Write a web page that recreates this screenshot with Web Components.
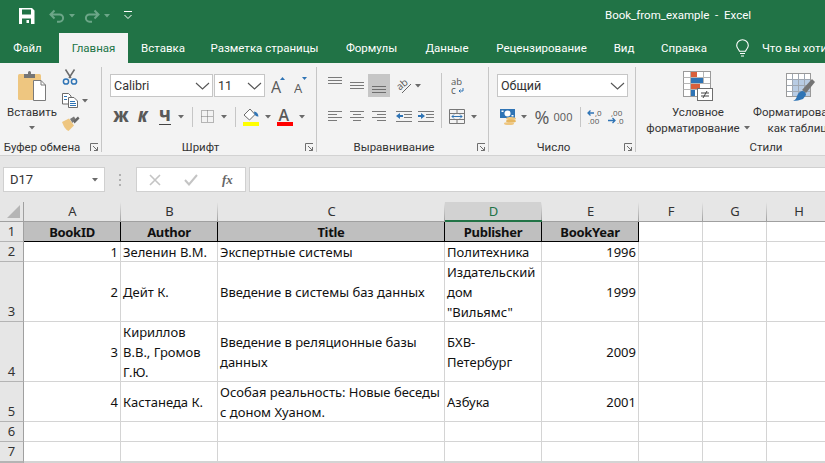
<!DOCTYPE html>
<html lang="ru">
<head>
<meta charset="utf-8">
<title>Book_from_example - Excel</title>
<style>
  html, body { margin: 0; height: 100%; overflow: hidden; background: #fff; }
  body { font: 11.5px Roboto, "Noto Sans", sans-serif; }
</style>
</head>
<body>
<x-excel>
  <x-titlebar title-text="Book_from_example  -  Excel"></x-titlebar>
  <x-tabs></x-tabs>
  <x-ribbon>
    <x-group w="102" label="Буфер обмена" launcher="11">
      <x-big w="64" top="4">
        <x-icon name="paste"></x-icon>
        <span>Вставить</span>
        <x-icon name="caret" style="margin-top:6px"></x-icon>
      </x-big>
      <x-col w="36" gap="8" top="2" style="margin-left:-2px">
        <x-row h="16"><x-tool w="16"><x-icon name="cut"></x-icon></x-tool></x-row>
        <x-row h="15"><x-tool w="16"><x-icon name="copy"></x-icon></x-tool><x-tool w="14"><x-icon name="caret"></x-icon></x-tool></x-row>
        <x-row h="15"><x-tool w="18"><x-icon name="painter"></x-icon></x-tool></x-row>
      </x-col>
    </x-group>

    <x-group w="215" label="Шрифт" launcher="11">
      <x-col w="214" gap="8" top="7">
        <x-row>
          <x-tool w="8"></x-tool>
          <x-combo w="103" text="Calibri"></x-combo>
          <x-tool w="1"></x-tool>
          <x-combo w="51" text="11"></x-combo>
          <x-tool w="6"></x-tool>
          <x-tool w="14"><x-icon name="grow"></x-icon></x-tool>
          <x-tool w="9"></x-tool>
          <x-tool w="13"><x-icon name="shrink"></x-icon></x-tool>
        </x-row>
        <x-row>
          <x-tool w="9"></x-tool>
          <x-tool w="20"><x-glyph b>Ж</x-glyph></x-tool>
          <x-tool w="23"><x-glyph b i>К</x-glyph></x-tool>
          <x-tool w="22"><x-glyph b u>Ч</x-glyph></x-tool>
          <x-tool w="10"><x-icon name="caret"></x-icon></x-tool>
          <x-tool w="13"><x-sep h="20"></x-sep></x-tool>
          <x-tool w="16"><x-icon name="borders"></x-icon></x-tool>
          <x-tool w="18"><x-icon name="caret"></x-icon></x-tool>
          <x-tool w="4"><x-sep h="20"></x-sep></x-tool>
          <x-tool w="28"><x-icon name="fill"></x-icon></x-tool>
          <x-tool w="6"><x-icon name="caret"></x-icon></x-tool>
          <x-tool w="28"><x-icon name="fontcolor"></x-icon></x-tool>
          <x-tool w="6"><x-icon name="caret"></x-icon></x-tool>
        </x-row>
      </x-col>
    </x-group>

    <x-group w="172" label="Выравнивание" launcher="11">
      <x-col w="124" gap="8" top="7">
        <x-row>
          <x-tool w="8"></x-tool>
          <x-tool w="20" style="align-items:flex-start;padding-top:3px"><x-icon name="vtop"></x-icon></x-tool>
          <x-tool w="23"><x-icon name="vmid"></x-icon></x-tool>
          <x-tool w="22" on="1" style="align-items:flex-end;padding-bottom:4px"><x-icon name="vbot"></x-icon></x-tool>
          <x-tool w="6"></x-tool>
          <x-tool w="16"><x-icon name="orient"></x-icon></x-tool>
          <x-tool w="12"><x-icon name="caret"></x-icon></x-tool>
        </x-row>
        <x-row>
          <x-tool w="8"></x-tool>
          <x-tool w="20"><x-icon name="aleft"></x-icon></x-tool>
          <x-tool w="23"><x-icon name="acenter"></x-icon></x-tool>
          <x-tool w="22"><x-icon name="aright"></x-icon></x-tool>
          <x-tool w="6"></x-tool>
          <x-tool w="16"><x-icon name="outdent"></x-icon></x-tool>
          <x-tool w="6"></x-tool>
          <x-tool w="16"><x-icon name="indent"></x-icon></x-tool>
        </x-row>
      </x-col>
      <x-sep h="55" style="margin-top:6px"></x-sep>
      <x-col w="46" gap="8" top="7">
        <x-row>
          <x-tool w="9"></x-tool>
          <x-tool w="13"><x-icon name="wrap"></x-icon></x-tool>
        </x-row>
        <x-row>
          <x-tool w="7"></x-tool>
          <x-tool w="16"><x-icon name="merge"></x-icon></x-tool>
          <x-tool w="17"><x-icon name="caret"></x-icon></x-tool>
        </x-row>
      </x-col>
    </x-group>

    <x-group w="147" label="Число" launcher="11">
      <x-col w="146" gap="8" top="7">
        <x-row>
          <x-tool w="8"></x-tool>
          <x-combo w="131" text="Общий"></x-combo>
        </x-row>
        <x-row>
          <x-tool w="11"></x-tool>
          <x-tool w="16"><x-icon name="money"></x-icon></x-tool>
          <x-tool w="16"><x-icon name="caret"></x-icon></x-tool>
          <x-tool w="20"><x-glyph size="18" light>%</x-glyph></x-tool>
          <x-tool w="22"><x-glyph size="11">000</x-glyph></x-tool>
          <x-tool w="12"><x-sep h="20"></x-sep></x-tool>
          <x-tool w="18"><x-icon name="decless"></x-icon></x-tool>
          <x-tool w="4"></x-tool>
          <x-tool w="16"><x-icon name="decmore"></x-icon></x-tool>
        </x-row>
      </x-col>
    </x-group>

    <x-group w="260" label="Стили" last>
      <x-big w="6"></x-big>
      <x-big w="112" top="4">
        <x-icon name="condfmt"></x-icon>
        <span>Условное</span>
        <span>форматирование<x-icon name="caret" style="margin-left:4px;vertical-align:2px"></x-icon></span>
      </x-big>
      <x-big w="92" top="6">
        <x-icon name="tablefmt"></x-icon>
        <span>Форматирование</span>
        <span>как таблицу</span>
      </x-big>
    </x-group>
  </x-ribbon>
  <x-formula-bar cell="D17"></x-formula-bar>
  <x-sheet></x-sheet>
</x-excel>

<script>
const ln = (c, ...rows) => `<path stroke="${c}" fill="none" d="${rows.map(r => `M${r[0]} ${r[1] + .5}H${r[2]}`).join('')}"/>`;

const ICONS = {
  save: [16, 16, `<path fill="#fff" fill-rule="evenodd" d="M0 0H13L15.5 2.5V16H0ZM3 1.5V6.5H12V1.5ZM3 10.5V16H12V10.5Z"/><rect x="7.5" y="12" width="2.5" height="3" fill="#fff"/>`],
  undo: [16, 14, `<path d="M5.5 1.5 1.5 5.5 5.5 9.5M1.5 5.5H10.5A3.6 3.6 0 0 1 10.5 12.7H8" fill="none" stroke="#6ca688" stroke-width="2"/>`],
  redo: [16, 14, `<path d="M10.5 1.5 14.5 5.5 10.5 9.5M14.5 5.5H5.5A3.6 3.6 0 0 0 5.5 12.7H8" fill="none" stroke="#6ca688" stroke-width="2"/>`],
  caretfade: [6, 4, `<path d="M0 0H6L3 3.5Z" fill="#6ca688"/>`],
  qat: [10, 9, `<path d="M1 .5H9M1.5 4 5 7.5 8.5 4" fill="none" stroke="#fff"/>`],
  caret: [6, 4, `<path d="M0 0H6L3 3.5Z" fill="#6a6a6a"/>`],
  chevron: [15, 8, `<path d="M1 1 7.5 7 14 1" fill="none" stroke="#555" stroke-width="1.1"/>`],
  bulb: [15, 18, `<path d="M7.5 .7A5.8 5.8 0 0 0 1.7 6.5C1.7 9 3.6 10 4.5 12.3H10.5C11.4 10 13.3 9 13.3 6.5A5.8 5.8 0 0 0 7.5 .7ZM5 14.5H10M6 17H9" fill="none" stroke="#fff" stroke-width="1.1"/>`],
  paste: [28, 30, `<rect y="3" width="23" height="26" rx="1.5" fill="#eec680"/><path d="M7 3H10V1.5Q10 0 11.5 0Q13 0 13 1.5V3H17V7H6V3Z" fill="#757575"/><path d="M15.5 9.5H23L27.5 14V29.5H15.5Z" fill="#fff" stroke="#7a7a7a"/><path d="M23 9.5V14H27.5" fill="none" stroke="#7a7a7a"/>`],
  cut: [16, 16, `<path d="M3.5 .5 9 9M12.5 .5 7 9" stroke="#6b6b6b" stroke-width="1.5" fill="none"/><circle cx="4" cy="12.5" r="2.6" fill="none" stroke="#2f74b5" stroke-width="1.5"/><circle cx="12" cy="12.5" r="2.6" fill="none" stroke="#2f74b5" stroke-width="1.5"/>`],
  copy: [16, 15, `<path d="M.5.5H6.5L9 3V11H.5Z" fill="#fff" stroke="#6b6b6b"/><path d="M6.5 4.5H12L15.5 8V14.5H6.5Z" fill="#fff" stroke="#6b6b6b"/>${ln('#2f74b5', [2, 3, 5], [2, 6, 5], [8, 8, 13], [8, 10, 14], [8, 12, 14])}`],
  painter: [18, 15, `<path d="M0 6 7 2.5 12 9.5 6.5 15Q3 14 0 6Z" fill="#eec680"/><path d="M8 3 12 .5 12 .5 13.5 3 10.5 7Z" fill="#777"/><path d="M11 5 16 .5 17.5 2.5 12.5 7.5Z" fill="#666"/>`],
  grow: [14, 20, `<text x="0" y="17" font-family="Open Sans" font-size="16" fill="#595959">A</text><path d="M9 4 11.5 1 14 4Z" fill="#2f74b5"/>`],
  shrink: [13, 20, `<text x="0" y="17" font-family="Open Sans" font-size="13" fill="#595959">A</text><path d="M8 1H13L10.5 4Z" fill="#2f74b5"/>`],
  borders: [13, 13, `<path d="M.5 .5H12.5V12.5H.5ZM6.5 .5V12.5M.5 6.5H12.5" fill="none" stroke="#777" stroke-dasharray="1 1"/>`],
  fill: [16, 18, `<path d="M1 7 7 1 12 6.5 6.5 12Z" fill="#fff" stroke="#6b6b6b"/><path d="M11 3.5Q15 4 15.5 8.5Q13 9 11.5 6.5Z" fill="#2f74b5"/><rect y="14" width="16" height="4" fill="#ffff00"/>`],
  fontcolor: [16, 18, `<text x="1.5" y="13" font-family="Open Sans" font-size="16" font-weight="600" fill="#595959">A</text><rect y="14" width="16" height="4" fill="#ff0000"/>`],
  vtop: [14, 8, ln('#7a7a7a', [0, 0, 14], [0, 3, 14], [0, 6, 14])],
  vmid: [14, 8, ln('#7a7a7a', [0, 0, 14], [0, 3, 14], [0, 6, 14])],
  vbot: [14, 7, ln('#6e6e6e', [0, 0, 14], [0, 3, 14], [0, 6, 14])],
  aleft: [14, 11, ln('#7a7a7a', [0, 0, 14], [0, 3, 9], [0, 6, 14], [0, 9, 9])],
  acenter: [14, 11, ln('#7a7a7a', [0, 0, 14], [3, 3, 11], [0, 6, 14], [3, 9, 11])],
  aright: [14, 11, ln('#7a7a7a', [0, 0, 14], [5, 3, 14], [0, 6, 14], [5, 9, 14])],
  outdent: [16, 11, ln('#7a7a7a', [0, 0, 16], [8, 3, 16], [8, 6, 16], [0, 10, 16]) + `<path d="M0 5 4 2V4H7V6H4V8Z" fill="#2f74b5"/>`],
  indent: [16, 11, ln('#7a7a7a', [0, 0, 16], [8, 3, 16], [8, 6, 16], [0, 10, 16]) + `<path d="M7 5 3 2V4H0V6H3V8Z" fill="#2f74b5"/>`],
  orient: [16, 16, `<text x="1" y="11" font-family="Open Sans" font-size="10" fill="#555" transform="rotate(-40 5 8)">ab</text><path d="M6 15 15 6" stroke="#666" fill="none"/>`],
  wrap: [13, 16, `<text x="0" y="7" font-family="Open Sans" font-size="9.5" fill="#555">ab</text><text x="0" y="15.5" font-family="Open Sans" font-size="10" fill="#555">c</text><path d="M12 10V13H8M9.5 11.5 8 13 9.5 14.5" fill="none" stroke="#2f74b5"/>`],
  merge: [16, 15, `<path d="M.5.5H15.5V14.5H.5ZM.5 4.5H15.5M.5 10.5H15.5M8 .5V4.5M8 10.5V14.5" fill="none" stroke="#777"/><path d="M3 7.5H13M5 5.5 3 7.5 5 9.5M11 5.5 13 7.5 11 9.5" fill="none" stroke="#2f74b5"/>`],
  money: [16, 16, `<rect width="15" height="9" fill="#2f74b5"/><ellipse cx="7.5" cy="4.5" rx="3" ry="3" fill="#fff"/><rect x="1.5" y="1.5" width="2" height="1.5" fill="#fff"/><rect x="11.5" y="6" width="2" height="1.5" fill="#fff"/><ellipse cx="11" cy="9.5" rx="5" ry="1.6" fill="#eec680"/><ellipse cx="11" cy="12" rx="5" ry="1.6" fill="#e6b65f"/><ellipse cx="9" cy="14.5" rx="5" ry="1.5" fill="#eec680"/>`],
  decless: [16, 15, `<text x="8" y="7" font-family="Open Sans" font-size="8" fill="#555">,0</text><text x="1" y="15" font-family="Open Sans" font-size="8" fill="#555">,00</text><path d="M7 4H1M3.5 1.5 1 4 3.5 6.5" fill="none" stroke="#2f74b5" stroke-width="1.3"/>`],
  decmore: [16, 15, `<text x="3" y="7" font-family="Open Sans" font-size="8" fill="#555">,00</text><text x="9" y="15" font-family="Open Sans" font-size="8" fill="#555">,0</text><path d="M0 11.5H7M4.5 9 7 11.5 4.5 14" fill="none" stroke="#2f74b5" stroke-width="1.3"/>`],
  condfmt: [30, 30, `<rect x=".5" y=".5" width="27" height="25" fill="#fff" stroke="#9a9a9a"/><rect x="8" y="1" width="6" height="5" fill="#d9603b"/><rect x="8" y="7" width="12" height="5" fill="#2f74b5"/><rect x="8" y="13" width="9" height="5" fill="#d9603b"/><rect x="8" y="19" width="4" height="6" fill="#2f74b5"/><path d="M7.5 1V25M20.5 1V12M.5 6.5H27M.5 12.5H27M.5 18.5H14" stroke="#b5b5b5" fill="none"/><rect x="14.5" y="17.5" width="15" height="12" fill="#fff" stroke="#6e6e6e"/><path d="M18 22H26M18 25H26M24 20 20 27" stroke="#444" fill="none"/>`],
  tablefmt: [29, 28, `<rect x=".5" y=".5" width="24" height="23" fill="#fff" stroke="#9a9a9a"/><rect x="1" y="1" width="23" height="5" fill="#fff"/><rect x="6" y="6" width="18" height="17" fill="#b8cce4"/><path d="M6.5 1V23M12.5 1V23M18.5 1V23M1 6.5H24M1 12.5H24M1 18.5H24" stroke="#9fa8b3" fill="none"/><path d="M16 17 26 6 29 9 20 20Z" fill="#757575"/><path d="M7 28Q10 27 11 23Q13 18 17 18Q20 19 20 22L17 26Q12 28 7 28Z" fill="#2f74b5"/>`],
  launcher: [8, 8, `<path d="M.5 8V.5H8M3 3 7.5 7.5M7.5 4V7.5H4" fill="none" stroke="#6e6e6e"/>`],
  dots: [3, 12, `<rect width="2" height="2" y="0" fill="#b0b0b0"/><rect width="2" height="2" y="5" fill="#b0b0b0"/><rect width="2" height="2" y="10" fill="#b0b0b0"/>`],
  cancel: [12, 12, `<path d="M1 1 11 11M11 1 1 11" stroke="#c4c4c4" stroke-width="1.6" fill="none"/>`],
  enter: [14, 12, `<path d="M1 6 5 10.5 13 1" stroke="#c4c4c4" stroke-width="2" fill="none"/>`],
};

class XIcon extends HTMLElement {
  connectedCallback() {
    const [w, h, body] = ICONS[this.getAttribute('name')];
    this.attachShadow({ mode: 'open' }).innerHTML = `
      <style>:host { display: inline-block; line-height: 0; } svg { display: block; }</style>
      <svg width="${w}" height="${h}" viewBox="0 0 ${w} ${h}">${body}</svg>`;
  }
}

class XExcel extends HTMLElement {
  constructor() {
    super();
    this.attachShadow({ mode: 'open' }).innerHTML = `
      <style>:host { display: flex; flex-direction: column; width: 825px; height: 463px; overflow: hidden; }</style>
      <slot></slot>`;
  }
}

class XTitlebar extends HTMLElement {
  connectedCallback() {
    const title = this.getAttribute('title-text');
    this.attachShadow({ mode: 'open' }).innerHTML = `
      <style>
        :host { display: flex; align-items: center; height: 33px; background: #217346; color: #fff; flex: none; padding-left: 19px; box-sizing: border-box; }
        .title { margin-left: 472px; white-space: pre; margin-top: -4px; }
        x-icon { margin-top: -2px; }
      </style>
      <x-icon name="save"></x-icon>
      <x-icon name="undo" style="margin-left:14px"></x-icon>
      <x-icon name="caretfade" style="margin-left:4px"></x-icon>
      <x-icon name="redo" style="margin-left:9px"></x-icon>
      <x-icon name="caretfade" style="margin-left:4px"></x-icon>
      <x-icon name="qat" style="margin-left:13px"></x-icon>
      <span class="title">${title}</span>`;
  }
}

class XTabs extends HTMLElement {
  connectedCallback() {
    // width of each tab, the text sits in its middle
    const tabs = [['Файл', 55], ['Главная', 69, 1], ['Вставка', 70], ['Разметка страницы', 133], ['Формулы', 81],
      ['Данные', 70], ['Рецензирование', 119], ['Вид', 46], ['Справка', 74]];
    this.attachShadow({ mode: 'open' }).innerHTML = `
      <style>
        :host { display: flex; height: 30px; background: #217346; color: #fff; flex: none; white-space: nowrap; }
        .tab { display: flex; align-items: center; justify-content: center; flex: none; height: 30px; padding-bottom: 1px; box-sizing: border-box; }
        .on { background: #f3f3f3; color: #217346; margin-left: 4px; }
        .tell { display: flex; align-items: center; gap: 12px; margin-left: 14px; }
      </style>
      ${tabs.map(([t, w, on]) => `<div class="tab ${on ? 'on' : ''}" style="width:${w}px">${t}</div>`).join('')}
      <div class="tell"><x-icon name="bulb"></x-icon><span>Что вы хотите сделать?</span></div>`;
  }
}

class XRibbon extends HTMLElement {
  constructor() {
    super();
    this.attachShadow({ mode: 'open' }).innerHTML = `
      <style>:host { display: flex; height: 93px; background: #f3f3f3; border-bottom: 1px solid #d2d2d2; box-sizing: border-box; flex: none; overflow: hidden; color: #333; }</style>
      <slot></slot>`;
  }
}

class XGroup extends HTMLElement {
  connectedCallback() {
    const launcher = this.getAttribute('launcher');
    this.attachShadow({ mode: 'open' }).innerHTML = `
      <style>
        :host { display: flex; flex-direction: column; flex: none; position: relative; box-sizing: border-box; height: 85px; margin-top: 4px;
                width: ${this.getAttribute('w')}px; border-right: ${this.hasAttribute('last') ? 0 : 1}px solid #c6c6c6; }
        .body { display: flex; flex: 1; min-height: 0; }
        .label { height: 16px; line-height: 16px; padding-right: ${launcher ? 17 : 0}px; transform: translateY(3px); text-align: center; white-space: nowrap; color: #333; }
        x-icon { position: absolute; bottom: 1px; right: 3px; }
      </style>
      <div class="body"><slot></slot></div>
      <div class="label" part="label">${this.getAttribute('label')}</div>
      ${launcher ? '<x-icon name="launcher"></x-icon>' : ''}`;
  }
}

class XBig extends HTMLElement {
  connectedCallback() {
    this.attachShadow({ mode: 'open' }).innerHTML = `
      <style>
        :host { display: flex; flex-direction: column; align-items: center; flex: none; box-sizing: border-box; line-height: 16px; white-space: nowrap; color: #333;
                width: ${this.getAttribute('w')}px; padding-top: ${this.getAttribute('top') || 0}px; }
        ::slotted(x-icon:first-child) { margin-bottom: 3px; }
      </style>
      <slot></slot>`;
  }
}

class XCol extends HTMLElement {
  connectedCallback() {
    this.attachShadow({ mode: 'open' }).innerHTML = `
      <style>:host { display: flex; flex-direction: column; flex: none; box-sizing: border-box;
        width: ${this.getAttribute('w')}px; gap: ${this.getAttribute('gap')}px; padding-top: ${this.getAttribute('top')}px; }</style>
      <slot></slot>`;
  }
}

class XRow extends HTMLElement {
  connectedCallback() {
    this.attachShadow({ mode: 'open' }).innerHTML = `
      <style>:host { display: flex; align-items: stretch; height: ${this.getAttribute('h') || 23}px; }</style>
      <slot></slot>`;
  }
}

class XTool extends HTMLElement {
  connectedCallback() {
    const on = this.hasAttribute('on');
    this.attachShadow({ mode: 'open' }).innerHTML = `
      <style>:host { display: flex; align-items: center; justify-content: center; flex: none; box-sizing: border-box; width: ${this.getAttribute('w')}px; ${on ? 'background: #c6c6c6;' : ''} }</style>
      <slot></slot>`;
  }
}

class XSep extends HTMLElement {
  connectedCallback() {
    this.attachShadow({ mode: 'open' }).innerHTML = `
      <style>:host { display: block; flex: none; width: 1px; height: ${this.getAttribute('h')}px; background: #c6c6c6; }</style>`;
  }
}

class XGlyph extends HTMLElement {
  connectedCallback() {
    const has = a => this.hasAttribute(a);
    this.attachShadow({ mode: 'open' }).innerHTML = `
      <style>
        :host { display: inline-block; line-height: 1; color: #595959; font-family: "Open Sans", sans-serif; font-size: ${this.getAttribute('size') || 15}px;
          font-weight: ${has('b') ? 800 : 400}; font-style: ${has('i') ? 'italic' : 'normal'};
          ${has('u') ? 'border-bottom: 1px solid #444; padding-bottom: 1px;' : ''} }
      </style>
      <slot></slot>`;
  }
}

class XCombo extends HTMLElement {
  connectedCallback() {
    this.attachShadow({ mode: 'open' }).innerHTML = `
      <style>
        :host { display: flex; align-items: center; justify-content: space-between; flex: none; box-sizing: border-box; height: 23px;
          width: ${this.getAttribute('w')}px; background: #fff; border: 1px solid #c6c6c6; padding: 0 2px 0 3px; font-size: 12.5px; color: #333; }
      </style>
      <span>${this.getAttribute('text')}</span><x-icon name="chevron"></x-icon>`;
  }
}

class XFormulaBar extends HTMLElement {
  connectedCallback() {
    this.attachShadow({ mode: 'open' }).innerHTML = `
      <style>
        :host { display: flex; height: 46px; background: #e6e6e6; flex: none; box-sizing: border-box; padding: 11px 0 0 3px; align-items: flex-start; font-size: 13px; color: #333; }
        .box { display: flex; align-items: center; height: 25px; box-sizing: border-box; background: #fff; border: 1px solid #d0d0d0; }
        .name { width: 102px; padding: 0 6px; justify-content: space-between; }
        .grip { width: 31px; height: 25px; display: flex; align-items: center; justify-content: center; }
        .btns { width: 110px; padding-left: 12px; gap: 23px; }
        .fx { font: italic 600 13px "Liberation Serif", serif; color: #666; margin-left: 1px; }
        .input { flex: 1; margin-left: 3px; border-right: 0; }
      </style>
      <div class="box name"><span>${this.getAttribute('cell')}</span><x-icon name="caret"></x-icon></div>
      <div class="grip"><x-icon name="dots"></x-icon></div>
      <div class="box btns"><x-icon name="cancel"></x-icon><x-icon name="enter"></x-icon><span class="fx">fx</span></div>
      <div class="box input"></div>`;
  }
}

class XSheet extends HTMLElement {
  connectedCallback() {
    const cols = [97, 97, 227, 97, 97, 64, 64, 64];
    const heads = 'ABCDEFGH'.split('');
    const rows = [
      [20, [['BookID'], ['Author'], ['Title'], ['Publisher'], ['BookYear']]],
      [20, [['1', 'r'], ['Зеленин В.М.'], ['Экспертные системы'], ['Политехника'], ['1996', 'r']]],
      [60, [['2', 'r'], ['Дейт К.'], ['Введение в системы баз данных'], ['Издательский<br>дом<br>"Вильямс"'], ['1999', 'r']]],
      [60, [['3', 'r'], ['Кириллов<br>В.В., Громов<br>Г.Ю.'], ['Введение в реляционные базы<br>данных'], ['БХВ-<br>Петербург'], ['2009', 'r']]],
      [40, [['4', 'r'], ['Кастанеда К.'], ['Особая реальность: Новые беседы<br>с доном Хуаном.'], ['Азбука'], ['2001', 'r']]],
      [20, []],
      [20, []],
      [1, []],
    ];
    let html = '<div class="corner"><svg width="13" height="13"><path d="M13 0V13H0Z" fill="#b5b5b5"/></svg></div>';
    heads.forEach((h) => { html += `<div class="ch ${h === 'D' ? 'sel' : ''}">${h}</div>`; });
    rows.forEach(([, cells], r) => {
      html += `<div class="rh">${r < 7 ? r + 1 : ''}</div>`;
      heads.forEach((h, c) => {
        const [text = '', align = ''] = cells[c] || [];
        const cls = r === 0 && c < 5 ? 'hd' : '';
        html += `<div class="c ${align} ${cls}"><span>${text}</span></div>`;
      });
    });
    this.attachShadow({ mode: 'open' }).innerHTML = `
      <style>
        :host { display: grid; flex: none; background: #fff; font: 13px/20px "Noto Sans", sans-serif; color: #111;
          grid-template-columns: 24px ${cols.map(w => w + 'px').join(' ')};
          grid-template-rows: 20px ${rows.map(r => r[0] + 'px').join(' ')}; }
        div { box-sizing: border-box; white-space: nowrap; }
        .corner { background: #e6e6e6; border-right: 1px solid #a0a0a0; border-bottom: 1px solid #a0a0a0; display: flex; align-items: flex-end; justify-content: flex-end; padding: 0 3px 3px 0; }
        .ch { --bg: #e6e6e6; background: linear-gradient(#e6e6e6, #a0a0a0) right / 1px 100% no-repeat, var(--bg); text-align: center; line-height: 19px; color: #333; border-bottom: 1px solid #a0a0a0; }
        .ch.sel { --bg: #d2d2d2; color: #217346; border-bottom: 2px solid #217346; line-height: 18px; }
        .rh { background: #e6e6e6; color: #333; text-align: center; border-right: 1px solid #a0a0a0; border-bottom: 1px solid #b4b4b4; display: flex; align-items: flex-end; justify-content: center; line-height: 19px; }
        .c { display: flex; align-items: center; padding: 0 2px; border-right: 1px solid #d4d4d4; border-bottom: 1px solid #d4d4d4; overflow: hidden; }
        .c.r { justify-content: flex-end; }
        .c.hd { background: #bfbfbf; justify-content: center; font-weight: 700; letter-spacing: -.3px; border-right-color: #000; border-bottom-color: #000; }
      </style>
      ${html}`;
  }
}

const defs = { 'x-icon': XIcon, 'x-excel': XExcel, 'x-titlebar': XTitlebar, 'x-tabs': XTabs, 'x-ribbon': XRibbon, 'x-group': XGroup, 'x-big': XBig,
  'x-col': XCol, 'x-row': XRow, 'x-tool': XTool, 'x-sep': XSep, 'x-glyph': XGlyph, 'x-combo': XCombo, 'x-formula-bar': XFormulaBar, 'x-sheet': XSheet };
Object.entries(defs).forEach(([name, cls]) => customElements.define(name, cls));
</script>
</body>
</html>
